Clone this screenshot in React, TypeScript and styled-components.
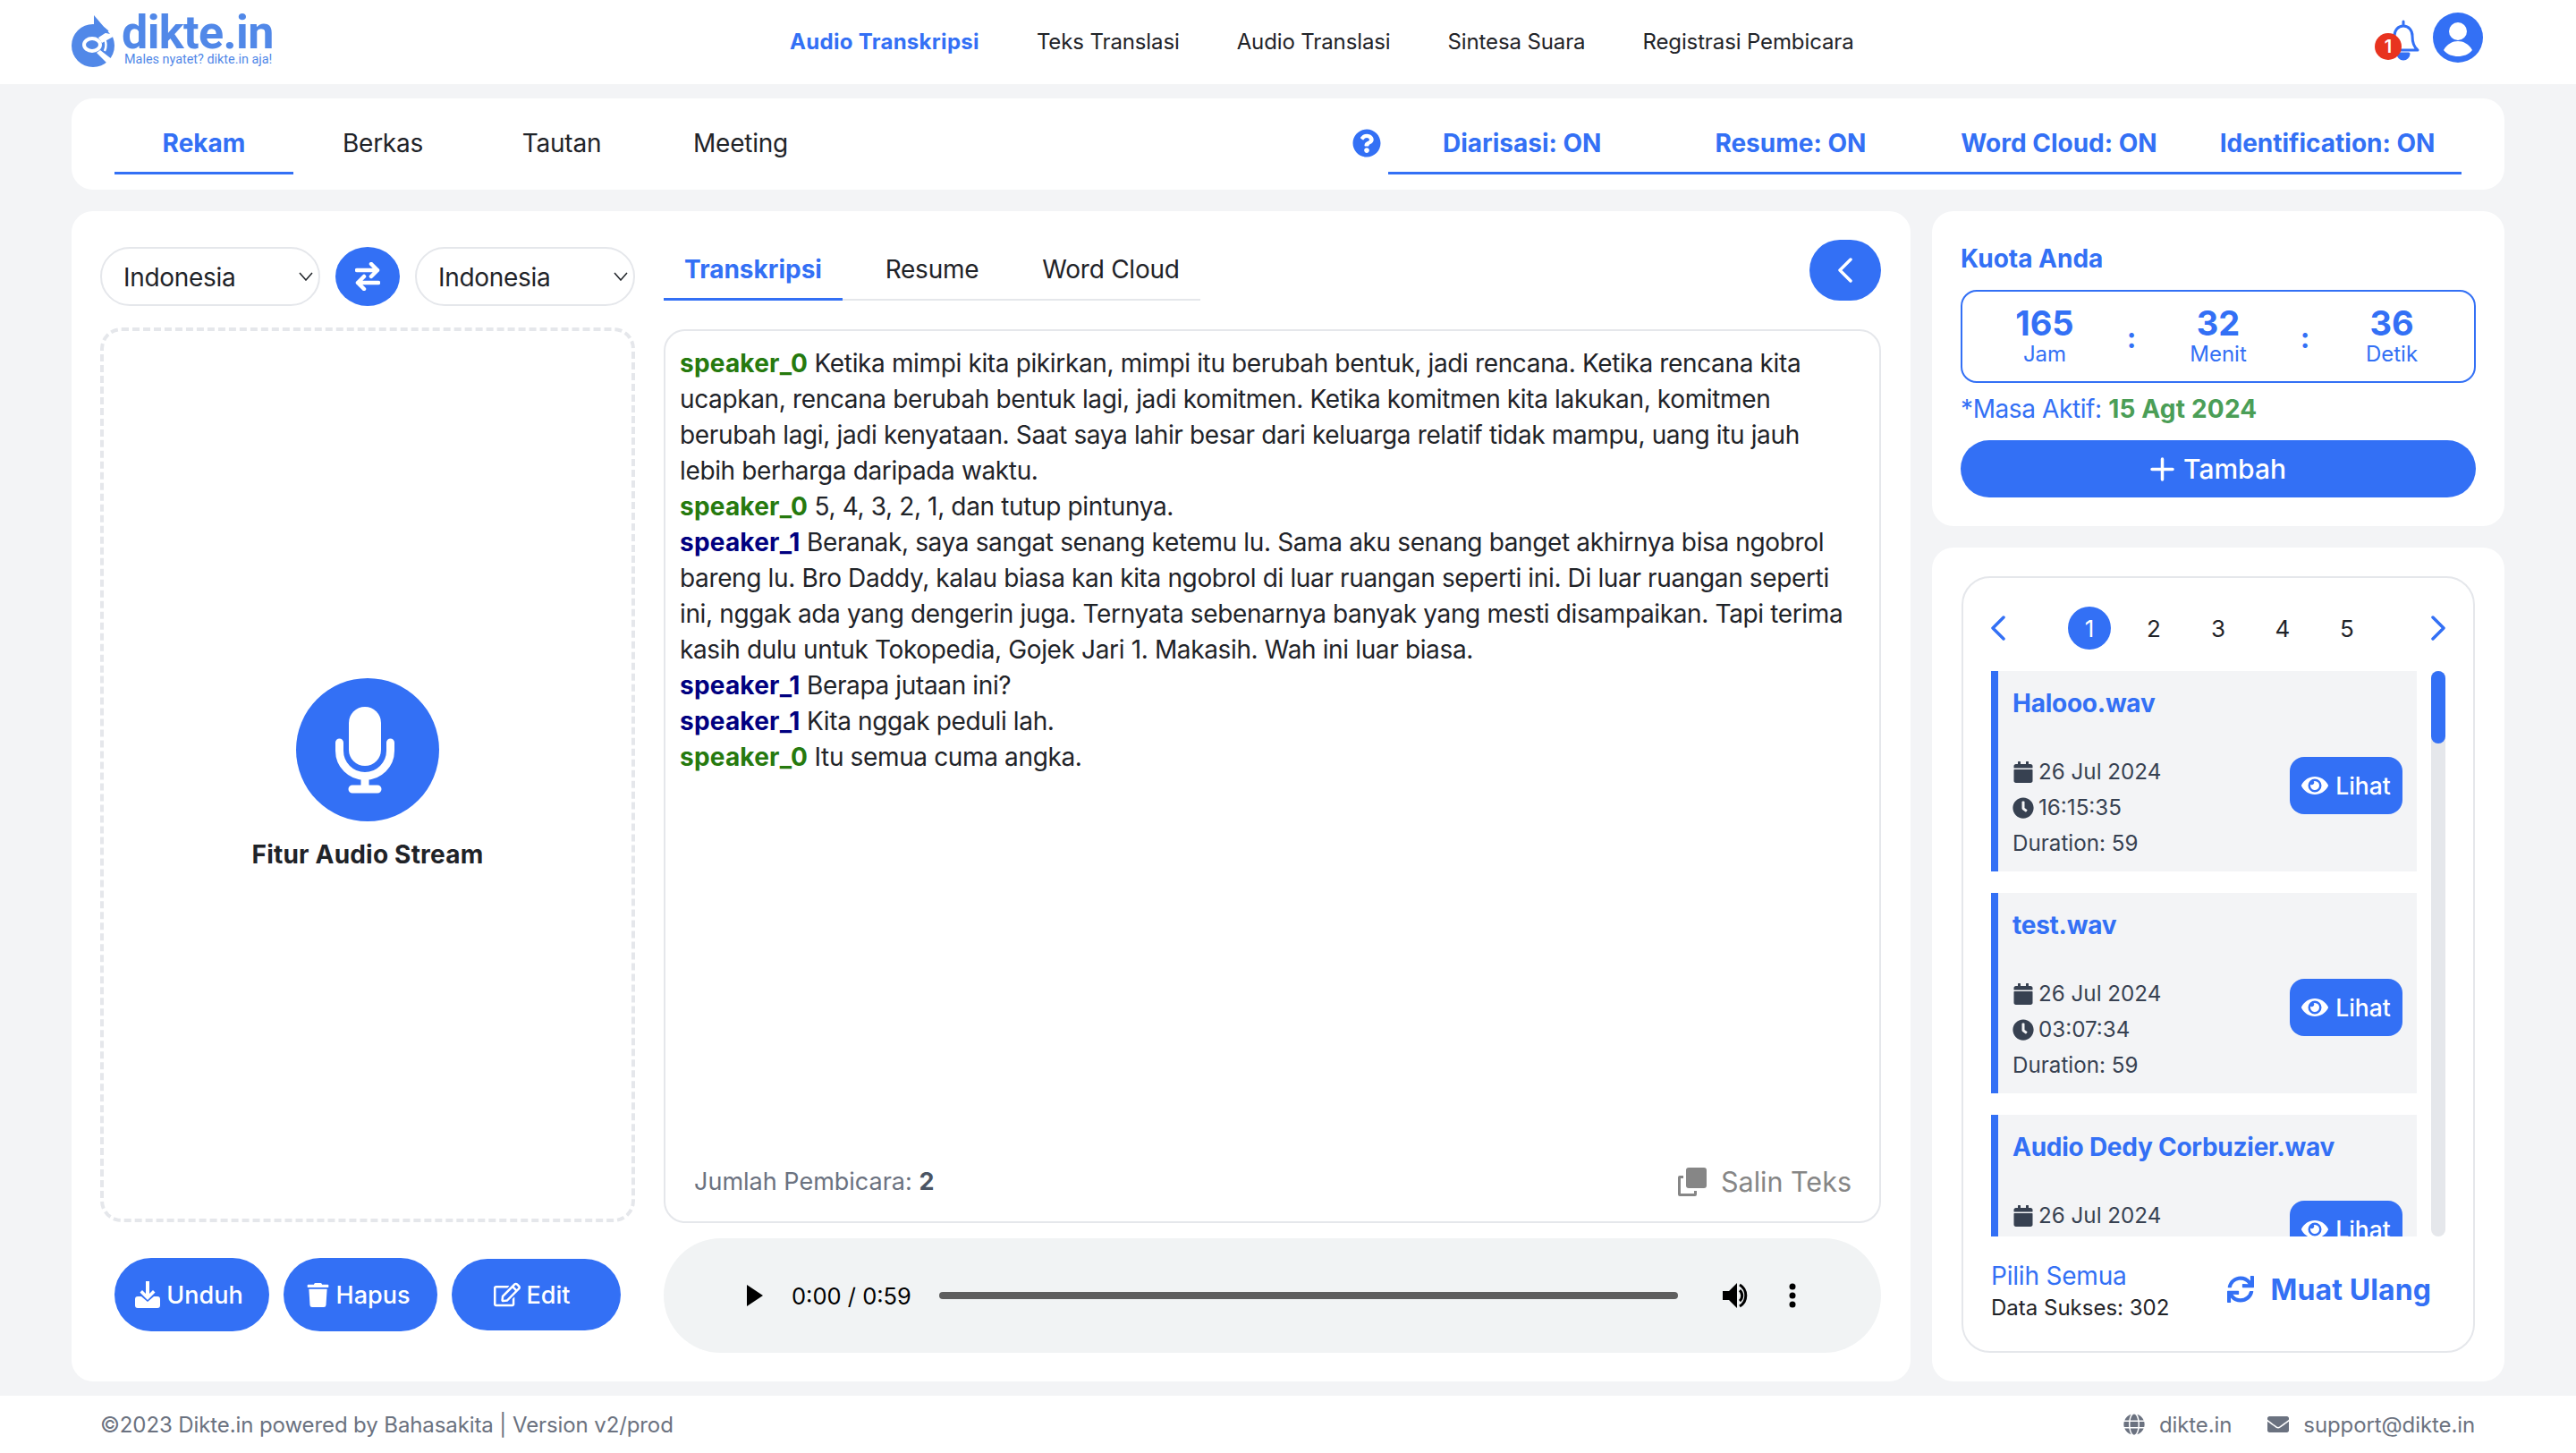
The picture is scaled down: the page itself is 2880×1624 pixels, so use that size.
import React from "react";
import styled, { createGlobalStyle } from "styled-components";
import {
  FaCalendar, FaClock, FaEnvelope, FaEye, FaGlobe,
  FaQuestionCircle, FaRegEdit, FaSync, FaTrash,
} from "react-icons/fa";

const BLUE = "#3370f5";

const Global = createGlobalStyle`
  html, body { margin: 0; padding: 0; background: #f3f4f6; }
  body { font-family: Inter, "Liberation Sans", sans-serif; color: #1f2328; }
  * { box-sizing: border-box; }
`;

const Page = styled.div`
  width: 2880px; height: 1624px; display: flex; flex-direction: column; overflow: hidden;
`;

const Header = styled.header`
  height: 94px; flex: none; background: #fff; display: flex; align-items: center; padding: 0 104px 0 80px;
`;
const Logo = styled.div`
  width: 225px; height: 94px; display: flex; gap: 6px; align-items: flex-start; flex: none;
`;
const LogoWords = styled.div`
  display: flex; flex-direction: column; color: #5188e8;
`;
const LogoName = styled.span`
  font-family: Roboto, sans-serif; font-weight: 700; font-size: 52px; line-height: 42px; letter-spacing: -0.6px; margin-top: 16px;
`;
const LogoTag = styled.span`
  font-family: Roboto, sans-serif; font-size: 14.4px; line-height: 15px; margin: 1px 0 0 3px; white-space: nowrap;
`;
const Nav = styled.nav`
  display: flex; gap: 64px; margin-left: 578px;
`;
const NavLink = styled.a<{ $active?: boolean }>`
  font-size: 24px; line-height: 32px; white-space: nowrap;
  color: ${(p) => (p.$active ? BLUE : "#1f2328")};
  font-weight: ${(p) => (p.$active ? 700 : 400)};
  letter-spacing: ${(p) => (p.$active ? "0.3px" : "-0.12px")};
`;
const HeaderIcons = styled.div`
  margin-left: auto; display: flex; align-items: center; gap: 15px; position: relative; top: -5px;
`;
const BellWrap = styled.div`
  position: relative; width: 36px; height: 48px; top: 4px;
`;
const Badge = styled.span`
  position: absolute; left: -14px; top: 15px; width: 30px; height: 30px; border-radius: 50%;
  background: #e8331f; color: #fff; font-size: 20px; font-weight: 600; display: flex; align-items: center; justify-content: center;
`;

const Content = styled.main`
  flex: 1; padding: 16px 80px; display: flex; flex-direction: column; gap: 24px; min-height: 0;
`;
const Card = styled.section`
  background: #fff; border-radius: 24px;
`;
const TopCard = styled(Card)`
  height: 102px; flex: none; display: flex; padding: 15px 48px 0; align-items: flex-start;
`;
const Tab = styled.div<{ $active?: boolean }>`
  width: 200px; height: 70px; display: flex; align-items: center; justify-content: center; padding-top: 2px;
  font-size: 28px; white-space: nowrap;
  color: ${(p) => (p.$active ? BLUE : "#1f2328")};
  font-weight: ${(p) => (p.$active ? 700 : 400)};
  letter-spacing: ${(p) => (p.$active ? "0" : "-0.25px")};
  border-bottom: 3px solid ${(p) => (p.$active ? BLUE : "transparent")};
`;
const Toggles = styled.div`
  margin-left: auto; display: flex; align-items: center; height: 70px;
`;
const Help = styled.span`
  color: ${BLUE}; font-size: 32px; display: flex; margin-right: 8px;
`;
const ToggleRow = styled.div`
  width: 1200px; height: 70px; display: flex; align-items: center; padding-top: 2px; border-bottom: 3px solid ${BLUE};
  color: ${BLUE}; font-weight: 700; font-size: 28px; white-space: nowrap;
`;
const Toggle = styled.span<{ $left: number }>`
  margin-left: ${(p) => p.$left}px;
`;

const MainRow = styled.div`
  flex: 1; display: grid; grid-template-columns: 2056px 640px; gap: 24px; min-height: 0;
`;
const MainCard = styled(Card)`
  display: grid; grid-template-columns: 598px 1361px; gap: 32px; padding: 32px 33px 32px 32px;
`;
const LeftCol = styled.div`
  display: flex; flex-direction: column; padding-top: 8px;
`;
const LangRow = styled.div`
  display: flex; justify-content: space-between; align-items: center; height: 66px;
`;
const LangWrap = styled.div`
  position: relative; width: 246px; height: 66px;
`;
const LangSelect = styled.select`
  appearance: none; width: 100%; height: 100%; border: 2px solid #e5e7eb; border-radius: 33px; background: #fff;
  padding: 2px 30px 0 24px; font: 400 28px Inter, sans-serif; letter-spacing: -0.3px; color: #1f2328;
`;
const LangCaret = styled.svg`
  position: absolute; right: 8px; top: 28px; pointer-events: none;
`;
const SwapBtn = styled.button`
  width: 72px; height: 66px; border: 0; border-radius: 50%; background: ${BLUE}; color: #fff;
  display: flex; align-items: center; justify-content: center; padding: 0;
`;
const DropZone = styled.div`
  margin-top: 24px; height: 1000px; border: 4px dashed #e5e7eb; border-radius: 24px;
  display: flex; flex-direction: column; align-items: center; justify-content: center;
`;
const StreamLabel = styled.div`
  margin-top: 18px; font-size: 28px; font-weight: 700; line-height: 38px; letter-spacing: 0.2px; color: #1f2328;
`;
const ActionRow = styled.div`
  margin-top: 40px; padding-left: 16px; display: flex; gap: 16px; align-items: center;
`;
const ActionBtn = styled.button<{ $w: number; $h?: number; $shift: number }>`
  width: ${(p) => p.$w}px; height: ${(p) => p.$h ?? 82}px; border: 0; border-radius: 41px; background: ${BLUE}; color: #fff;
  display: flex; align-items: center; justify-content: center; gap: 7px; font: 500 27px Inter, sans-serif;
  padding: 0 ${(p) => p.$shift}px 0 0;
`;

const RightCol = styled.div`
  display: flex; flex-direction: column;
`;
const InnerTabsRow = styled.div`
  display: flex; align-items: flex-start; height: 68px;
`;
const InnerTabs = styled.div`
  display: flex; height: 68px; border-bottom: 2px solid #e5e7eb; width: 600px;
`;
const InnerTab = styled.div<{ $active?: boolean }>`
  width: 200px; height: 68px; display: flex; align-items: center; justify-content: center; padding-top: 1px;
  font-size: 28px; white-space: nowrap;
  color: ${(p) => (p.$active ? BLUE : "#1f2328")};
  font-weight: ${(p) => (p.$active ? 700 : 400)};
  letter-spacing: ${(p) => (p.$active ? "0" : "-0.25px")};
  border-bottom: 3px solid ${(p) => (p.$active ? BLUE : "transparent")};
`;
const BackBtn = styled.button`
  margin-left: auto; width: 80px; height: 68px; border: 0; border-radius: 34px; background: ${BLUE}; color: #fff;
  display: flex; align-items: center; justify-content: center; padding: 0;
`;
const TextBox = styled.div`
  margin-top: 32px; height: 999px; border: 2px solid #e5e7eb; border-radius: 24px; padding: 16px 16px 0 16px;
  display: flex; flex-direction: column;
`;
const Transcript = styled.div`
  flex: 1; padding-right: 18px; font-size: 28px; line-height: 40px; letter-spacing: -0.36px; color: #1f2328;
`;
const Line = styled.p`
  margin: 0;
`;
const Speaker = styled.b<{ $id: number }>`
  font-weight: 700; letter-spacing: 0.2px; color: ${(p) => (p.$id === 0 ? "#267a0e" : "#000080")};
`;
const TextFooter = styled.div`
  height: 64px; display: flex; align-items: flex-start; justify-content: space-between; padding: 0 15px 0 16px;
  flex: none;
`;
const SpeakerCount = styled.span`
  font-size: 27px; line-height: 40px; color: #6b7280; b { color: #4b5563; font-weight: 700; }
`;
const CopyBtn = styled.span`
  display: flex; align-items: center; gap: 16px; font-size: 30.5px; line-height: 40px; color: #868686;
`;
const AudioBar = styled.div`
  margin-top: 17px; height: 128px; border-radius: 64px; background: #f1f3f4; display: flex; align-items: center;
  padding-left: 93px; color: #000;
`;
const TimeText = styled.span`
  margin-left: 32px; font-size: 25.5px; width: 165px; white-space: nowrap;
`;
const Track = styled.div`
  width: 826px; height: 8px; border-radius: 4px; background: #5e5e5e;
`;
const AudioIcons = styled.div`
  margin-left: 50px; display: flex; align-items: center; gap: 44px;
`;

const Side = styled.div`
  display: flex; flex-direction: column; gap: 24px; min-height: 0;
`;
const QuotaCard = styled(Card)`
  height: 352px; flex: none; padding: 36px 32px 0;
`;
const QuotaTitle = styled.div`
  color: ${BLUE}; font-weight: 700; font-size: 28px; line-height: 34px;
`;
const QuotaBox = styled.div`
  margin-top: 18px; height: 104px; border: 2px solid ${BLUE}; border-radius: 18px; display: flex; align-items: center; justify-content: center;
  color: ${BLUE};
`;
const QuotaCell = styled.div`
  width: 160px; display: flex; flex-direction: column; align-items: center; padding-bottom: 4px;
`;
const QuotaNum = styled.div`
  font-size: 38px; font-weight: 700; line-height: 42px;
`;
const QuotaLabel = styled.div`
  font-size: 24px; line-height: 27px;
`;
const QuotaColon = styled.div`
  width: 34px; text-align: center; font-size: 32px; font-weight: 700; padding-top: 2px;
`;
const Active = styled.div`
  margin-top: 12px; font-size: 28px; line-height: 34px; letter-spacing: -0.4px; color: ${BLUE};
  b { color: #4b9e57; font-weight: 700; letter-spacing: 0.2px; }
`;
const AddBtn = styled.button`
  margin-top: 18px; width: 576px; height: 64px; border: 0; border-radius: 32px; background: ${BLUE}; color: #fff;
  display: flex; align-items: center; justify-content: center; gap: 10px; font: 500 30px Inter, sans-serif; padding: 0;
`;
const HistoryCard = styled(Card)`
  flex: 1; padding: 32px 33px; min-height: 0; display: flex;
`;
const HistoryBox = styled.div`
  flex: 1; border: 2px solid #e5e7eb; border-radius: 32px; padding: 32px 31px 0; display: flex; flex-direction: column;
`;
const Pager = styled.div`
  height: 48px; display: flex; align-items: center; color: ${BLUE};
`;
const PageNums = styled.div`
  display: flex; gap: 24px; margin-left: 70px;
`;
const PageNum = styled.span<{ $active?: boolean }>`
  width: 48px; height: 48px; border-radius: 50%; display: flex; align-items: center; justify-content: center; font-size: 26px;
  background: ${(p) => (p.$active ? BLUE : "transparent")}; color: ${(p) => (p.$active ? "#fff" : "#1f2328")};
`;
const PagerNext = styled.span`
  margin-left: auto; display: flex;
`;
const ListRow = styled.div`
  margin-top: 24px; height: 632px; display: flex; gap: 16px;
`;
const List = styled.div`
  width: 476px; overflow: hidden; display: flex; flex-direction: column; gap: 24px;
`;
const Item = styled.article`
  height: 224px; flex: none; background: #f3f4f6; border-left: 8px solid ${BLUE}; padding: 18px 16px 0 16px;
`;
const ItemTitle = styled.div`
  color: ${BLUE}; font-weight: 700; font-size: 28px; line-height: 36px; letter-spacing: -0.25px; white-space: nowrap;
`;
const ItemBody = styled.div`
  margin-top: 39px; display: flex; justify-content: space-between; align-items: flex-start;
`;
const Meta = styled.div`
  font-size: 24.2px; line-height: 40px; color: #374151;
`;
const MetaLine = styled.div`
  display: flex; align-items: center; gap: 5px; white-space: nowrap;
`;
const ViewBtn = styled.button`
  margin-top: 3px; width: 126px; height: 64px; border: 0; border-radius: 16px; background: ${BLUE}; color: #fff;
  display: flex; align-items: center; justify-content: center; gap: 8px; font: 500 26.5px Inter, sans-serif; padding: 0;
`;
const ScrollTrack = styled.div`
  width: 16px; height: 100%; border-radius: 8px; background: #e5e7eb;
`;
const ScrollThumb = styled.div`
  width: 16px; height: 81px; border-radius: 8px; background: ${BLUE};
`;
const HistoryFooter = styled.div`
  margin-top: 26px; display: flex; justify-content: space-between; padding-right: 16px;
`;
const SelectAll = styled.div`
  color: ${BLUE}; font-size: 28px; line-height: 36px; letter-spacing: -0.2px;
`;
const SuccessCount = styled.div`
  font-size: 24px; line-height: 36px; color: #1f2328;
`;
const Reload = styled.div`
  display: flex; align-items: center; gap: 19px; color: ${BLUE}; font-size: 32px; font-weight: 700; letter-spacing: 0.1px; margin-top: 7px; height: 52px;
`;

const Footer = styled.footer`
  height: 64px; flex: none; background: #fff; display: flex; align-items: center; padding: 0 113px 0 112px;
  font-size: 24px; letter-spacing: -0.1px; color: #6b7280;
`;
const FooterLinks = styled.div`
  margin-left: auto; display: flex; gap: 40px;
`;
const FooterLink = styled.span`
  display: flex; align-items: center; gap: 16px;
`;
const LogoSvg = styled.svg`
  margin-top: 17px; flex: none;
`;
const AudioSvg = styled.svg`
  flex: none;
`;

const LogoMark = () => (
  <LogoSvg width="50" height="58" viewBox="0 0 50 58">
    <circle cx="24" cy="34" r="24" fill="#5188e8" />
    <path d="M30 25 L50 12 V22 L34 31 Z" fill="#fff" />
    <path d="M32 39 L50 53 V58 H44 L28 42 Z" fill="#fff" />
    <path d="M25 0 L43 21 L25 17 Z" fill="#5188e8" />
    <ellipse cx="23" cy="33" rx="9" ry="7" fill="#5188e8" stroke="#fff" strokeWidth="4" />
    <path d="M37 27 Q40 33 37 40" fill="none" stroke="#fff" strokeWidth="2.5" />
  </LogoSvg>
);

const Bell = () => (
  <svg width="36" height="48" viewBox="0 0 36 48" fill="none" stroke={BLUE} strokeWidth="3" strokeLinejoin="round" strokeLinecap="round">
    <path d="M18 2v5M18 7c-6 0-10 5-10 11 0 7-1 12-6 16h32c-5-4-6-9-6-16 0-6-4-11-10-11z" />
    <path d="M12 38a6 6 0 0 0 12 0z" fill={BLUE} />
  </svg>
);

const Avatar = () => (
  <svg width="56" height="56" viewBox="0 0 56 56">
    <circle cx="28" cy="28" r="28" fill={BLUE} />
    <circle cx="28" cy="21" r="10" fill="#fff" />
    <path d="M12 42c4-7 10-10 16-10s12 3 16 10c-4 5-10 7-16 7s-12-2-16-7z" fill="#fff" />
  </svg>
);

const Mic = () => (
  <svg width="160" height="160" viewBox="0 0 160 160">
    <circle cx="80" cy="80" r="80" fill={BLUE} />
    <rect x="59" y="32" width="36" height="66" rx="18" fill="#fff" />
    <path d="M48.500 72v9a28.500 28.500 0 0 0 57 0v-9M77 110v14M63 124h28" fill="none" stroke="#fff" strokeWidth="9" strokeLinecap="round" />
  </svg>
);

const SwapIcon = () => (
  <svg width="28" height="32" viewBox="0 0 28 32" fill="none" stroke="#fff" strokeWidth="4.500" strokeLinecap="round" strokeLinejoin="round">
    <path d="M2 9h23M18 2l7 7-7 7M26 23H3M10 16l-7 7 7 7" />
  </svg>
);

const Caret = () => (
  <LangCaret width="16" height="10" viewBox="0 0 16 10" fill="none" stroke="#1f2328" strokeWidth="1.500">
    <path d="M1 1l7 8 7-8" />
  </LangCaret>
);

const DownloadIcon = () => (
  <svg width="28" height="30" viewBox="0 0 28 30" fill="#fff">
    <path d="M12 0h4v14l4-4 2.500 2.500L14 21 5.500 12.500 8 10l4 4z" />
    <path d="M3 17h4l7 6 7-6h4a3 3 0 0 1 3 3v7a3 3 0 0 1-3 3H3a3 3 0 0 1-3-3v-7a3 3 0 0 1 3-3z" />
  </svg>
);

const CopyIcon = () => (
  <svg width="32" height="32" viewBox="0 0 32 32" fill="#868686">
    <rect x="9" y="0" width="23" height="23" rx="3" />
    <path d="M2 9h4v3H3v17h15v-3h3v4a2 2 0 0 1-2 2H2a2 2 0 0 1-2-2V11a2 2 0 0 1 2-2z" />
  </svg>
);

const PlusIcon = () => (
  <svg width="27" height="27" viewBox="0 0 27 27" fill="none" stroke="#fff" strokeWidth="3.500" strokeLinecap="round">
    <path d="M13.500 2v23M2 13.500h23" />
  </svg>
);

const Chevron = ({ dir, color = BLUE }: { dir: "l" | "r"; color?: string }) => (
  <svg width="16" height="28" viewBox="0 0 16 28" fill="none" stroke={color} strokeWidth="3.500" strokeLinecap="round" strokeLinejoin="round">
    <path d={dir === "l" ? "M14 2 2 14l12 12" : "M2 2l12 12L2 26"} />
  </svg>
);

const Play = () => (
  <AudioSvg width="18" height="24" viewBox="0 0 18 24"><path d="M0 0l18 12L0 24z" fill="#000" /></AudioSvg>
);
const Volume = () => (
  <svg width="30" height="30" viewBox="0 0 30 30" fill="none">
    <path d="M0 10h7l9-9v28l-9-9H0z" fill="#000" />
    <path d="M19 9a8 8 0 0 1 0 12" stroke="#000" strokeWidth="3" />
    <path d="M19 3a14 14 0 0 1 0 24" stroke="#000" strokeWidth="3" />
  </svg>
);
const Kebab = () => (
  <svg width="8" height="28" viewBox="0 0 8 28" fill="#000">
    <circle cx="4" cy="4" r="3.500" /><circle cx="4" cy="14" r="3.500" /><circle cx="4" cy="24" r="3.500" />
  </svg>
);

const lines: { s: number; t: string }[] = [
  { s: 0, t: "Ketika mimpi kita pikirkan, mimpi itu berubah bentuk, jadi rencana. Ketika rencana kita ucapkan, rencana berubah bentuk lagi, jadi komitmen. Ketika komitmen kita lakukan, komitmen berubah lagi, jadi kenyataan. Saat saya lahir besar dari keluarga relatif tidak mampu, uang itu jauh lebih berharga daripada waktu." },
  { s: 0, t: "5, 4, 3, 2, 1, dan tutup pintunya." },
  { s: 1, t: "Beranak, saya sangat senang ketemu lu. Sama aku senang banget akhirnya bisa ngobrol bareng lu. Bro Daddy, kalau biasa kan kita ngobrol di luar ruangan seperti ini. Di luar ruangan seperti ini, nggak ada yang dengerin juga. Ternyata sebenarnya banyak yang mesti disampaikan. Tapi terima kasih dulu untuk Tokopedia, Gojek Jari 1. Makasih. Wah ini luar biasa." },
  { s: 1, t: "Berapa jutaan ini?" },
  { s: 1, t: "Kita nggak peduli lah." },
  { s: 0, t: "Itu semua cuma angka." },
];

const files = [
  { name: "Halooo.wav", date: "26 Jul 2024", time: "16:15:35", dur: 59 },
  { name: "test.wav", date: "26 Jul 2024", time: "03:07:34", dur: 59 },
  { name: "Audio Dedy Corbuzier.wav", date: "26 Jul 2024", time: "01:12:10", dur: 59 },
];

export default function App() {
  return (
    <Page>
      <Global />
      <Header>
        <Logo>
          <LogoMark />
          <LogoWords>
            <LogoName>dikte.in</LogoName>
            <LogoTag>Males nyatet? dikte.in aja!</LogoTag>
          </LogoWords>
        </Logo>
        <Nav>
          <NavLink $active>Audio Transkripsi</NavLink>
          <NavLink>Teks Translasi</NavLink>
          <NavLink>Audio Translasi</NavLink>
          <NavLink>Sintesa Suara</NavLink>
          <NavLink>Registrasi Pembicara</NavLink>
        </Nav>
        <HeaderIcons>
          <BellWrap><Bell /><Badge>1</Badge></BellWrap>
          <Avatar />
        </HeaderIcons>
      </Header>
      <Content>
        <TopCard>
          <Tab $active>Rekam</Tab>
          <Tab>Berkas</Tab>
          <Tab>Tautan</Tab>
          <Tab>Meeting</Tab>
          <Toggles>
            <Help><FaQuestionCircle /></Help>
            <ToggleRow>
              <Toggle $left={61}>Diarisasi: ON</Toggle>
              <Toggle $left={127}>Resume: ON</Toggle>
              <Toggle $left={106}>Word Cloud: ON</Toggle>
              <Toggle $left={70}>Identification: ON</Toggle>
            </ToggleRow>
          </Toggles>
        </TopCard>
        <MainRow>
          <MainCard>
            <LeftCol>
              <LangRow>
                <LangWrap>
                  <LangSelect defaultValue="id"><option value="id">Indonesia</option></LangSelect>
                  <Caret />
                </LangWrap>
                <SwapBtn aria-label="Tukar"><SwapIcon /></SwapBtn>
                <LangWrap>
                  <LangSelect defaultValue="id"><option value="id">Indonesia</option></LangSelect>
                  <Caret />
                </LangWrap>
              </LangRow>
              <DropZone>
                <Mic />
                <StreamLabel>Fitur Audio Stream</StreamLabel>
              </DropZone>
              <ActionRow>
                <ActionBtn $w={173} $shift={6}><DownloadIcon />Unduh</ActionBtn>
                <ActionBtn $w={172} $shift={6}><FaTrash size={27} />Hapus</ActionBtn>
                <ActionBtn $w={189} $h={80} $shift={10}><FaRegEdit size={30} />Edit</ActionBtn>
              </ActionRow>
            </LeftCol>
            <RightCol>
              <InnerTabsRow>
                <InnerTabs>
                  <InnerTab $active>Transkripsi</InnerTab>
                  <InnerTab>Resume</InnerTab>
                  <InnerTab>Word Cloud</InnerTab>
                </InnerTabs>
                <BackBtn aria-label="Kembali"><Chevron dir="l" color="#fff" /></BackBtn>
              </InnerTabsRow>
              <TextBox>
                <Transcript>
                  {lines.map((l, i) => (
                    <Line key={i}><Speaker $id={l.s}>speaker_{l.s}</Speaker> {l.t}</Line>
                  ))}
                </Transcript>
                <TextFooter>
                  <SpeakerCount>Jumlah Pembicara: <b>2</b></SpeakerCount>
                  <CopyBtn><CopyIcon />Salin Teks</CopyBtn>
                </TextFooter>
              </TextBox>
              <AudioBar>
                <Play />
                <TimeText>0:00 / 0:59</TimeText>
                <Track />
                <AudioIcons><Volume /><Kebab /></AudioIcons>
              </AudioBar>
            </RightCol>
          </MainCard>
          <Side>
            <QuotaCard>
              <QuotaTitle>Kuota Anda</QuotaTitle>
              <QuotaBox>
                <QuotaCell><QuotaNum>165</QuotaNum><QuotaLabel>Jam</QuotaLabel></QuotaCell>
                <QuotaColon>:</QuotaColon>
                <QuotaCell><QuotaNum>32</QuotaNum><QuotaLabel>Menit</QuotaLabel></QuotaCell>
                <QuotaColon>:</QuotaColon>
                <QuotaCell><QuotaNum>36</QuotaNum><QuotaLabel>Detik</QuotaLabel></QuotaCell>
              </QuotaBox>
              <Active>*Masa Aktif: <b>15 Agt 2024</b></Active>
              <AddBtn><PlusIcon />Tambah</AddBtn>
            </QuotaCard>
            <HistoryCard>
              <HistoryBox>
                <Pager>
                  <Chevron dir="l" />
                  <PageNums>
                    {[1, 2, 3, 4, 5].map((n) => <PageNum key={n} $active={n === 1}>{n}</PageNum>)}
                  </PageNums>
                  <PagerNext><Chevron dir="r" /></PagerNext>
                </Pager>
                <ListRow>
                  <List>
                    {files.map((f) => (
                      <Item key={f.name}>
                        <ItemTitle>{f.name}</ItemTitle>
                        <ItemBody>
                          <Meta>
                            <MetaLine><FaCalendar size={24} />{f.date}</MetaLine>
                            <MetaLine><FaClock size={24} />{f.time}</MetaLine>
                            <MetaLine>Duration: {f.dur}</MetaLine>
                          </Meta>
                          <ViewBtn><FaEye size={30} />Lihat</ViewBtn>
                        </ItemBody>
                      </Item>
                    ))}
                  </List>
                  <ScrollTrack><ScrollThumb /></ScrollTrack>
                </ListRow>
                <HistoryFooter>
                  <div>
                    <SelectAll>Pilih Semua</SelectAll>
                    <SuccessCount>Data Sukses: 302</SuccessCount>
                  </div>
                  <Reload><FaSync size={30} />Muat Ulang</Reload>
                </HistoryFooter>
              </HistoryBox>
            </HistoryCard>
          </Side>
        </MainRow>
      </Content>
      <Footer>
        <span>©2023 Dikte.in powered by Bahasakita | Version v2/prod</span>
        <FooterLinks>
          <FooterLink><FaGlobe size={24} />dikte.in</FooterLink>
          <FooterLink><FaEnvelope size={24} />support@dikte.in</FooterLink>
        </FooterLinks>
      </Footer>
    </Page>
  );
}
